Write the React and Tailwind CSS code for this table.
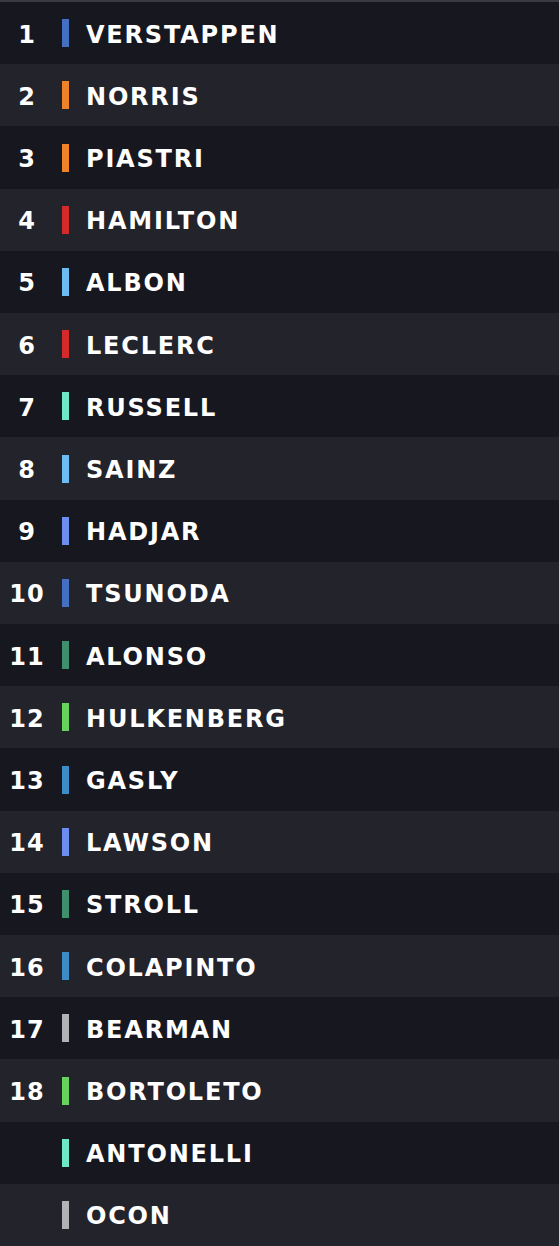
import React from "react";

const drivers = [
  { pos: "1", name: "VERSTAPPEN", color: "bg-[#4470c4]" },
  { pos: "2", name: "NORRIS", color: "bg-[#f0832a]" },
  { pos: "3", name: "PIASTRI", color: "bg-[#f0832a]" },
  { pos: "4", name: "HAMILTON", color: "bg-[#d42a2a]" },
  { pos: "5", name: "ALBON", color: "bg-[#6cbcf4]" },
  { pos: "6", name: "LECLERC", color: "bg-[#d42a2a]" },
  { pos: "7", name: "RUSSELL", color: "bg-[#6ee8c8]" },
  { pos: "8", name: "SAINZ", color: "bg-[#6cbcf4]" },
  { pos: "9", name: "HADJAR", color: "bg-[#6c8ef0]" },
  { pos: "10", name: "TSUNODA", color: "bg-[#4470c4]" },
  { pos: "11", name: "ALONSO", color: "bg-[#3f8f6c]" },
  { pos: "12", name: "HULKENBERG", color: "bg-[#66d45c]" },
  { pos: "13", name: "GASLY", color: "bg-[#3c8cc8]" },
  { pos: "14", name: "LAWSON", color: "bg-[#6c8ef0]" },
  { pos: "15", name: "STROLL", color: "bg-[#3f8f6c]" },
  { pos: "16", name: "COLAPINTO", color: "bg-[#3c8cc8]" },
  { pos: "17", name: "BEARMAN", color: "bg-[#b0b2b6]" },
  { pos: "18", name: "BORTOLETO", color: "bg-[#66d45c]" },
  { pos: "", name: "ANTONELLI", color: "bg-[#6ee8c8]" },
  { pos: "", name: "OCON", color: "bg-[#b0b2b6]" },
];

export default function App() {
  return (
    <div
      className="h-screen w-full flex flex-col border-t-2 border-[#3a3a40] bg-[#17171f] text-white"
      style={{ fontFamily: '"DejaVu Sans", sans-serif' }}
    >
      {drivers.map((d, i) => (
        <div
          key={d.name}
          className={`flex-1 flex items-center ${i % 2 === 0 ? "bg-[#17171f]" : "bg-[#23232b]"}`}
        >
          <div className="w-[54px] mt-[3px] text-center text-[24px] font-bold leading-none tracking-[1px]">{d.pos}</div>
          <div className={`ml-[8px] w-[7px] h-[28px] ${d.color}`} />
          <div className="ml-[17px] mt-[3px] text-[24px] font-bold leading-none tracking-[1.8px]">{d.name}</div>
        </div>
      ))}
    </div>
  );
}
